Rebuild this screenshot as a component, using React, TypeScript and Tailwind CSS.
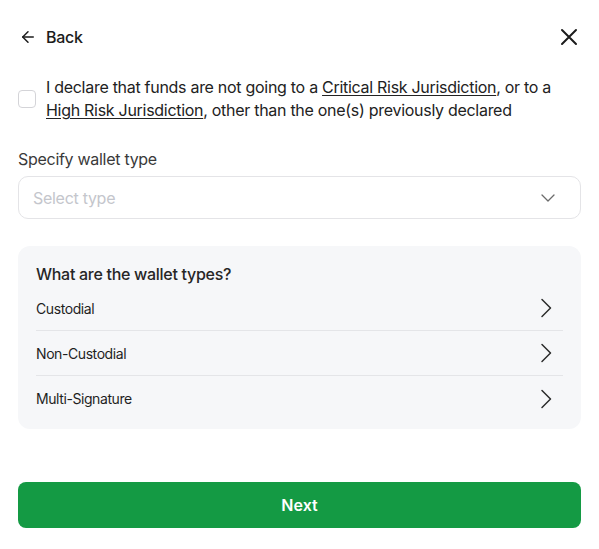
import React, { useState } from 'react'

const walletTypes = ['Custodial', 'Non-Custodial', 'Multi-Signature']

const ArrowLeft = () => (
  <svg width="18" height="18" viewBox="0 0 24 24" fill="none" stroke="currentColor" strokeWidth="2" strokeLinecap="round" strokeLinejoin="round">
    <path d="m12 19-7-7 7-7" />
    <path d="M19 12H5" />
  </svg>
)

const CloseIcon = () => (
  <svg width="18" height="18" viewBox="0 0 18 18" fill="none" stroke="currentColor" strokeWidth="2" strokeLinecap="round">
    <path d="M2 2l14 14M16 2 2 16" />
  </svg>
)

const ChevronRight = () => (
  <svg width="12" height="20" viewBox="0 0 12 20" fill="none" stroke="currentColor" strokeWidth="1.5" strokeLinecap="round" strokeLinejoin="round">
    <path d="M2 1.5 10.5 10 2 18.5" />
  </svg>
)

const ChevronDown = () => (
  <svg width="24" height="24" viewBox="0 0 24 24" fill="none" stroke="currentColor" strokeWidth="1.3" strokeLinecap="round" strokeLinejoin="round">
    <path d="m6 9 6 6 6-6" />
  </svg>
)

const App: React.FC = () => {
  const [checked, setChecked] = useState(false)

  return (
    <div className="min-h-screen bg-white px-[18px] pt-[25px] tracking-[-0.018em] text-[#1c1c1c]" style={{ fontFamily: 'Inter, "Noto Sans", sans-serif' }}>
      {/* Header */}
      <div className="flex h-6 items-center justify-between">
        <button className="flex items-center gap-[9px] pl-[1px] text-[16px] font-medium text-[#1c1c1c]">
          <ArrowLeft /> Back
        </button>
        <button className="mr-[3px] text-[#1c1c1c]">
          <CloseIcon />
        </button>
      </div>

      {/* Declaration */}
      <label className="mt-[27px] flex items-center gap-[10px]">
        <input
          type="checkbox"
          checked={checked}
          onChange={() => setChecked(!checked)}
          className="h-[18px] w-[18px] shrink-0 appearance-none rounded-[4px] border border-[#d4d4d8] bg-white"
        />
        <span className="text-[16px] leading-[23px] text-[#222]">
          I declare that funds are not going to a <span className="underline underline-offset-2">Critical Risk Jurisdiction</span>, or to a{' '}
          <span className="underline underline-offset-2">High Risk Jurisdiction</span>, other than the one(s) previously declared
        </span>
      </label>

      {/* Wallet type select */}
      <div className="mt-[25px] text-[16px] leading-6 text-[#3a3a3a]">Specify wallet type</div>
      <button className="mt-[5px] flex h-[43px] w-full items-center justify-between rounded-[10px] border border-[#e4e4e7] bg-white pl-[14px] pr-[20px] text-[16px] text-[#c4c6cc]">
        <span>Select type</span>
        <span className="text-[#6b6b6b]"><ChevronDown /></span>
      </button>

      {/* Info card */}
      <div className="mt-[27px] rounded-[12px] bg-[#f6f7f9] px-[18px] pb-[8px] pt-[16px]">
        <div className="text-[16px] font-medium leading-6 text-[#262626]">What are the wallet types?</div>
        <div className="divide-y divide-[#e4e5e8]">
          {walletTypes.map(t => (
            <div key={t} className="flex h-[45px] items-center justify-between pr-[11px] text-[14px] tracking-[-0.03em] text-[#1f1f1f]">
              <span>{t}</span>
              <span className="text-[#2b2b2b]"><ChevronRight /></span>
            </div>
          ))}
        </div>
      </div>

      {/* Next */}
      <button className="mt-[53px] flex h-[46px] w-full items-center justify-center rounded-[8px] bg-[#149a44] text-[16px] font-semibold tracking-normal text-white">
        Next
      </button>
    </div>
  )
}

export default App
